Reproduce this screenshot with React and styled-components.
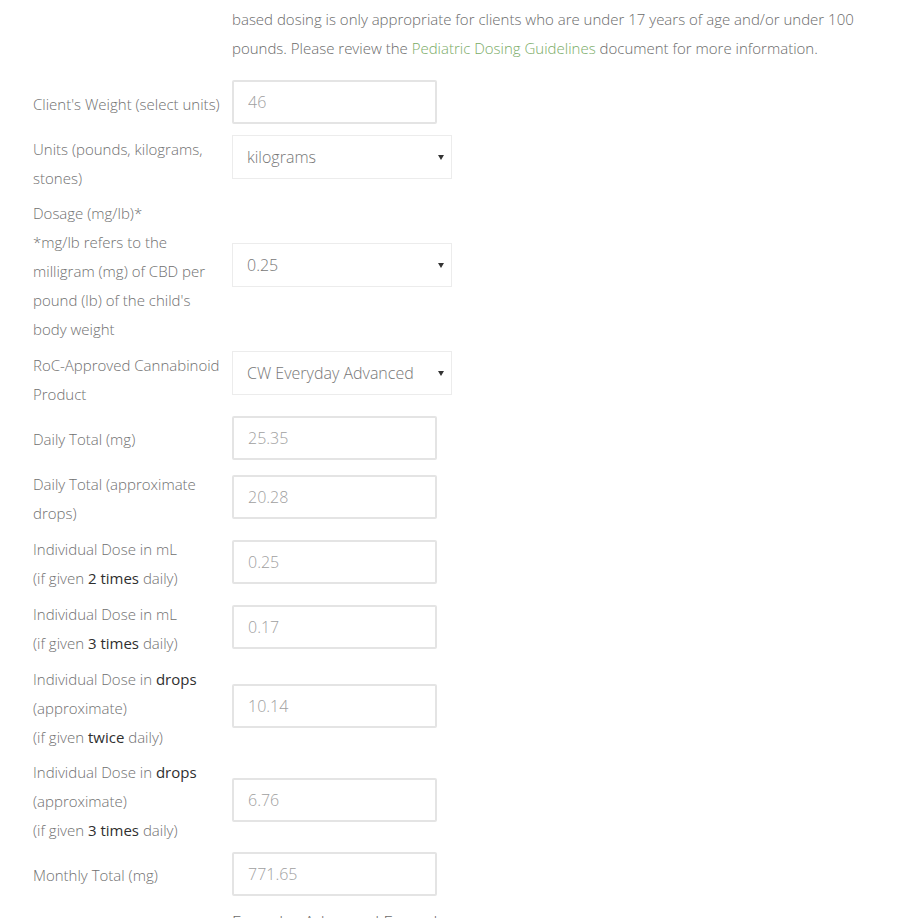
import React from 'react'
import styled, { createGlobalStyle } from 'styled-components'

const GlobalStyle = createGlobalStyle`
  html, body {
    margin: 0;
    padding: 0;
    background: #fff;
    overflow: hidden;
  }
  body {
    font-family: "Open Sans", "Liberation Sans", sans-serif;
    font-weight: 300;
    color: #6b6b6b;
  }
`;

const Page = styled.div`
  width: 905px;
  height: 918px;
  overflow: hidden;
  padding: 5px 0 0 33px;
  box-sizing: border-box;
`;

const Intro = styled.p`
  margin: 0 0 17px 199px;
  font-size: 15px;
  line-height: 29px;
  color: #6b6b6b;
  a {
    color: #7aab66;
    text-decoration: none;
  }
`;

const Form = styled.div`
  display: grid;
  grid-template-columns: 189px 1fr;
  column-gap: 10px;
  row-gap: 6.7px;
  align-items: center;
`;

const Label = styled.div`
  font-size: 15px;
  line-height: 29px;
  color: #707070;
  b {
    font-weight: 400;
    color: #2f2f2f;
  }
`;

const Field = styled.input`
  display: block;
  box-sizing: border-box;
  width: 205px;
  height: 44px;
  margin: 0 0 4px 0;
  padding: 0 14px;
  border: 2px solid #e4e4e4;
  border-radius: 2px;
  background: #fff;
  font-family: inherit;
  font-weight: 300;
  font-size: 16px;
  color: #a0a0a0;
  outline: none;
`;

const SelectWrap = styled.div`
  position: relative;
  width: 220px;
  height: 44px;
  margin-bottom: 14px;
  &::after {
    content: "";
    position: absolute;
    right: 8px;
    top: 20px;
    border-left: 3px solid transparent;
    border-right: 3px solid transparent;
    border-top: 5px solid #333;
  }
`;

const Select = styled.select`
  appearance: none;
  -webkit-appearance: none;
  box-sizing: border-box;
  width: 100%;
  height: 100%;
  padding: 0 14px;
  border: 1px solid #ececec;
  border-radius: 0;
  background: #fff;
  font-family: inherit;
  font-weight: 300;
  font-size: 16px;
  color: #777;
  outline: none;
`;

const Tail = styled.div`
  grid-column: 2;
  font-size: 17px;
  line-height: 29px;
  color: #6b6b6b;
`;

function TextRow({ label, value }) {
  return (
    <>
      <Label>{label}</Label>
      <Field readOnly value={value} />
    </>
  )
}

function SelectRow({ label, value, options }) {
  return (
    <>
      <Label>{label}</Label>
      <SelectWrap>
        <Select value={value} onChange={() => {}}>
          {options.map((o) => <option key={o}>{o}</option>)}
        </Select>
      </SelectWrap>
    </>
  )
}

export default function App() {
  return (
    <Page>
      <GlobalStyle />
      <Intro>
        based dosing is only appropriate for clients who are under 17 years of age and/or under 100<br />
        pounds. Please review the <a href="#">Pediatric Dosing Guidelines</a> document for more information.
      </Intro>
      <Form>
        <TextRow label="Client's Weight (select units)" value="46" />
        <SelectRow
          label="Units (pounds, kilograms, stones)"
          value="kilograms"
          options={['pounds', 'kilograms', 'stones']}
        />
        <SelectRow
          label={<>Dosage (mg/lb)*<br />*mg/lb refers to the milligram (mg) of CBD per pound (lb) of the child's body weight</>}
          value="0.25"
          options={['0.25', '0.5', '1']}
        />
        <SelectRow
          label="RoC-Approved Cannabinoid Product"
          value="CW Everyday Advanced"
          options={['CW Everyday Advanced']}
        />
        <TextRow label="Daily Total (mg)" value="25.35" />
        <TextRow label="Daily Total (approximate drops)" value="20.28" />
        <TextRow label={<>Individual Dose in mL<br />(if given <b>2 times</b> daily)</>} value="0.25" />
        <TextRow label={<>Individual Dose in mL<br />(if given <b>3 times</b> daily)</>} value="0.17" />
        <TextRow label={<>Individual Dose in <b>drops</b><br />(approximate)<br />(if given <b>twice</b> daily)</>} value="10.14" />
        <TextRow label={<>Individual Dose in <b>drops</b><br />(approximate)<br />(if given <b>3 times</b> daily)</>} value="6.76" />
        <TextRow label="Monthly Total (mg)" value="771.65" />
        <Tail>Everyday Advanced Formula</Tail>
      </Form>
    </Page>
  )
}
